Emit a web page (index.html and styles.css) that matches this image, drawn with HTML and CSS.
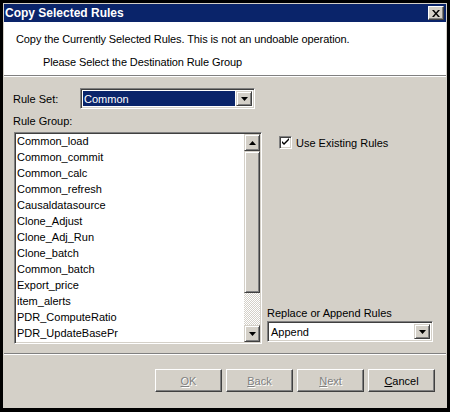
FILE: index.html
```html
<!DOCTYPE html>
<html>
<head>
<meta charset="utf-8">
<link rel="stylesheet" href="styles.css">
</head>
<body>
<div class="window">
  <div class="titlebar">
    <span class="title">Copy Selected Rules</span>
    <span class="close-btn">
      <svg width="8" height="7" viewBox="0 0 8 7"><path d="M0 0h2l2 2.5 2-2.5h2l-3 3.5 3 3.5h-2l-2-2.5-2 2.5h-2l3-3.5z" fill="#000"/></svg>
    </span>
  </div>
  <div class="header">
    <div class="header-line1">Copy the Currently Selected Rules. This is not an undoable operation.</div>
    <div class="header-line2">Please Select the Destination Rule Group</div>
  </div>
  <div class="separator"></div>
  <div class="content">
    <div class="ruleset-row">
      <span class="ruleset-label">Rule Set:</span>
      <div class="combo combo-ruleset">
        <span class="combo-value selected">Common</span>
        <span class="drop-btn"><svg width="7" height="4" viewBox="0 0 7 4"><path d="M0 0h7l-3.5 4z" fill="#000"/></svg></span>
      </div>
    </div>
    <div class="rulegroup-label">Rule Group:</div>
    <div class="main-row">
      <div class="listbox">
        <ul class="items">
          <li>Common_load</li>
          <li>Common_commit</li>
          <li>Common_calc</li>
          <li>Common_refresh</li>
          <li>Causaldatasource</li>
          <li>Clone_Adjust</li>
          <li>Clone_Adj_Run</li>
          <li>Clone_batch</li>
          <li>Common_batch</li>
          <li>Export_price</li>
          <li>item_alerts</li>
          <li>PDR_ComputeRatio</li>
          <li>PDR_UpdateBasePr</li>
        </ul>
        <div class="scrollbar">
          <span class="sb-btn"><svg width="7" height="4" viewBox="0 0 7 4"><path d="M3.5 0l3.5 4h-7z" fill="#000"/></svg></span>
          <span class="sb-thumb"></span>
          <span class="sb-track"></span>
          <span class="sb-btn"><svg width="7" height="4" viewBox="0 0 7 4"><path d="M0 0h7l-3.5 4z" fill="#000"/></svg></span>
        </div>
      </div>
      <div class="side">
        <label class="check-row">
          <span class="checkbox"><svg width="9" height="9" viewBox="0 0 9 9"><path d="M1 3l2 2 5-5v2l-5 5-2-2z" fill="#000"/></svg></span>
          <span>Use Existing Rules</span>
        </label>
        <div class="side-bottom">
          <div class="append-label">Replace or Append Rules</div>
          <div class="combo combo-append">
            <span class="combo-value">Append</span>
            <span class="drop-btn"><svg width="7" height="4" viewBox="0 0 7 4"><path d="M0 0h7l-3.5 4z" fill="#000"/></svg></span>
          </div>
        </div>
      </div>
    </div>
  </div>
  <div class="separator"></div>
  <div class="buttons">
    <span class="btn disabled"><u>O</u>K</span>
    <span class="btn disabled"><u>B</u>ack</span>
    <span class="btn disabled"><u>N</u>ext</span>
    <span class="btn"><u>C</u>ancel</span>
  </div>
</div>
</body>
</html>
```

FILE: styles.css
```css
* { box-sizing: border-box; }
html, body { margin: 0; padding: 0; background: #000; }
body { font-family: "Liberation Sans", Arial, sans-serif; font-size: 11px; color: #000; }

.window {
  width: 450px;
  height: 412px;
  border: 3px solid #000;
  border-bottom-width: 4px;
  padding: 1px;
  background: #d4d0c8;
  display: flex;
  flex-direction: column;
}

.titlebar {
  height: 18px;
  background: #0a246a;
  display: flex;
  align-items: center;
  justify-content: space-between;
  padding: 0 2px 0 1px;
}
.title {
  color: #fff;
  font-weight: bold;
  font-size: 12px;
  font-family: "Liberation Sans", Arial, sans-serif;
}
.close-btn {
  width: 16px;
  height: 14px;
  background: #d4d0c8;
  border: 1px solid;
  border-color: #fff #404040 #404040 #fff;
  box-shadow: inset -1px -1px #808080;
  display: flex;
  align-items: center;
  justify-content: center;
}

.header {
  height: 53px;
  background: #fff;
  padding: 10px 0 0 12px;
  letter-spacing: -0.1px;
}
.header-line1 { line-height: 14px; }
.header-line2 { line-height: 14px; margin-top: 9px; padding-left: 27px; }

.separator {
  height: 2px;
  border-top: 1px solid #808080;
  border-bottom: 1px solid #fff;
}

.content {
  height: 276px;
  padding: 11px 0 0 9px;
}

.ruleset-row {
  display: flex;
  align-items: center;
  height: 21px;
}
.ruleset-label { width: 67px; }

.combo {
  height: 21px;
  background: #fff;
  border: 1px solid;
  border-color: #808080 #fff #fff #808080;
  box-shadow: inset 1px 1px #404040, inset -1px -1px #d4d0c8;
  padding: 2px;
  display: flex;
  align-items: stretch;
}
.combo-ruleset { width: 175px; }
.combo-value {
  flex: 1;
  display: flex;
  align-items: center;
  padding-left: 1px;
}
.combo-value.selected { background: #0a246a; color: #fff; margin-right: 1px; }
.drop-btn {
  width: 16px;
  background: #d4d0c8;
  border: 1px solid;
  border-color: #d4d0c8 #404040 #404040 #d4d0c8;
  box-shadow: inset 1px 1px #fff, inset -1px -1px #808080;
  display: flex;
  align-items: center;
  justify-content: center;
}

.rulegroup-label {
  margin-top: 5px;
  line-height: 14px;
}

.main-row {
  display: flex;
  margin-top: 4px;
}

.listbox {
  width: 248px;
  height: 212px;
  margin-left: 1px;
  background: #fff;
  border: 1px solid;
  border-color: #808080 #fff #fff #808080;
  box-shadow: inset 1px 1px #404040, inset -1px -1px #d4d0c8;
  padding: 1px;
  display: flex;
}
.items {
  flex: 1;
  list-style: none;
  margin: 0;
  padding: 0 0 0 1px;
}
.items li { height: 16px; line-height: 15px; }

.scrollbar {
  width: 16px;
  display: flex;
  flex-direction: column;
}
.sb-btn {
  height: 17px;
  background: #d4d0c8;
  border: 1px solid;
  border-color: #d4d0c8 #404040 #404040 #d4d0c8;
  box-shadow: inset 1px 1px #fff, inset -1px -1px #808080;
  display: flex;
  align-items: center;
  justify-content: center;
}
.sb-thumb {
  height: 142px;
  background: #d4d0c8;
  border: 1px solid;
  border-color: #d4d0c8 #404040 #404040 #d4d0c8;
  box-shadow: inset 1px 1px #fff, inset -1px -1px #808080;
}
.sb-track {
  flex: 1;
  background-color: #d4d0c8;
  background-image: conic-gradient(#fff 25%, #d4d0c8 0 50%, #fff 0 75%, #d4d0c8 0);
  background-size: 2px 2px;
}

.side {
  width: 166px;
  margin-left: 5px;
  display: flex;
  flex-direction: column;
  justify-content: space-between;
  padding: 4px 0 2px 0;
}
.check-row {
  display: flex;
  align-items: center;
  gap: 4px;
  padding-left: 12px;
  height: 13px;
}
.checkbox {
  width: 13px;
  height: 13px;
  background: #fff;
  border: 1px solid;
  border-color: #808080 #fff #fff #808080;
  box-shadow: inset 1px 1px #404040, inset -1px -1px #d4d0c8;
  display: flex;
  align-items: center;
  justify-content: center;
}
.append-label { line-height: 14px; margin-bottom: 1px; }
.combo-append { width: 166px; }

.buttons {
  flex: 1;
  display: flex;
  justify-content: flex-end;
  gap: 4px;
  padding: 14px 11px 0 0;
}
.btn {
  width: 67px;
  height: 23px;
  background: #d4d0c8;
  border: 1px solid;
  border-color: #fff #404040 #404040 #fff;
  box-shadow: inset -1px -1px #808080;
  display: flex;
  align-items: center;
  justify-content: center;
}
.btn.disabled { color: #808080; text-shadow: 1px 1px #fff; }
```
